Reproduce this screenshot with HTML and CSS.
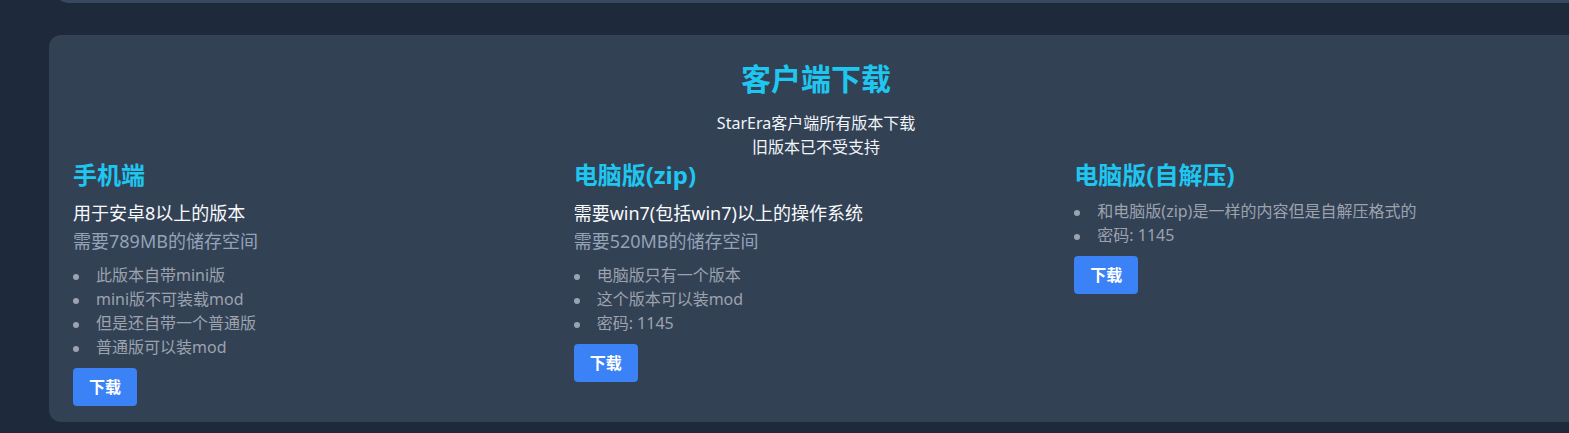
FILE: index.html
```html
<!DOCTYPE html>
<html lang="zh-CN">
<head>
<meta charset="utf-8">
<title>客户端下载</title>
<link rel="stylesheet" href="styles.css">
</head>
<body>
<div class="page">
  <div class="prev-clip"><div class="prev-card"></div></div>
  <section class="download-card">
    <h2 class="title">客户端下载</h2>
    <p class="subtitle">StarEra客户端所有版本下载<br>旧版本已不受支持</p>
    <div class="grid">
      <div class="col">
        <h3 class="col-title">手机端</h3>
        <p class="req">用于安卓8以上的版本</p>
        <p class="size">需要789MB的储存空间</p>
        <ul class="notes">
          <li>此版本自带mini版</li>
          <li>mini版不可装载mod</li>
          <li>但是还自带一个普通版</li>
          <li>普通版可以装mod</li>
        </ul>
        <a class="btn" href="#">下载</a>
      </div>
      <div class="col">
        <h3 class="col-title">电脑版(zip)</h3>
        <p class="req">需要win7(包括win7)以上的操作系统</p>
        <p class="size">需要520MB的储存空间</p>
        <ul class="notes">
          <li>电脑版只有一个版本</li>
          <li>这个版本可以装mod</li>
          <li>密码: 1145</li>
        </ul>
        <a class="btn" href="#">下载</a>
      </div>
      <div class="col">
        <h3 class="col-title">电脑版(自解压)</h3>
        <ul class="notes">
          <li>和电脑版(zip)是一样的内容但是自解压格式的</li>
          <li>密码: 1145</li>
        </ul>
        <a class="btn" href="#">下载</a>
      </div>
    </div>
  </section>
</div>
</body>
</html>
```

FILE: styles.css
```css
* { box-sizing: border-box; }
html, body {
  margin: 0;
  padding: 0;
  background: #1e293b;
  overflow: hidden;
}
body {
  font-family: "Noto Sans", "Noto Sans CJK SC", sans-serif;
  color: #e2e8f0;
}
.page {
  width: 1600px;
}
.prev-clip {
  height: 3px;
  overflow: hidden;
  display: flex;
  flex-direction: column;
  justify-content: flex-end;
  margin-left: 56px;
}
.prev-card {
  flex: none;
  height: 40px;
  background: #394861;
  border-radius: 12px;
}
.download-card {
  margin: 32px 0 0 49px;
  width: 1534px;
  background: #334155;
  border-radius: 12px;
  padding: 24px 24px 16px;
}
.title {
  margin: 2px 0 14px;
  text-align: center;
  font-size: 30px;
  line-height: 36px;
  font-weight: 700;
  color: #1ec6f0;
}
.subtitle {
  margin: 0;
  text-align: center;
  font-size: 16px;
  line-height: 24px;
  color: #f1f5f9;
}
.grid {
  display: grid;
  grid-template-columns: repeat(3, 1fr);
  gap: 16px;
}
.col {
  display: flex;
  flex-direction: column;
  align-items: flex-start;
}
.col-title {
  margin: 0 0 8px;
  font-size: 24px;
  line-height: 32px;
  font-weight: 700;
  color: #1ec6f0;
}
.req {
  margin: 0;
  font-size: 18px;
  line-height: 28px;
  color: #f8fafc;
}
.size {
  margin: 0 0 8px;
  font-size: 18px;
  line-height: 28px;
  color: #94a3b8;
}
.notes {
  margin: 0 0 9px;
  padding: 0;
  list-style: none;
  font-size: 16px;
  line-height: 24px;
  color: #9ca3af;
}
.notes li {
  padding-left: 23px;
}
.notes li::before {
  content: "";
  display: inline-block;
  width: 6px;
  height: 6px;
  border-radius: 50%;
  background: #9ca3af;
  margin-left: -23px;
  margin-right: 17px;
  vertical-align: middle;
}
.btn {
  display: inline-block;
  background: #3b82f6;
  color: #ffffff;
  font-weight: 700;
  font-size: 16px;
  line-height: 24px;
  padding: 7px 16px;
  border-radius: 4px;
  text-decoration: none;
}
```
